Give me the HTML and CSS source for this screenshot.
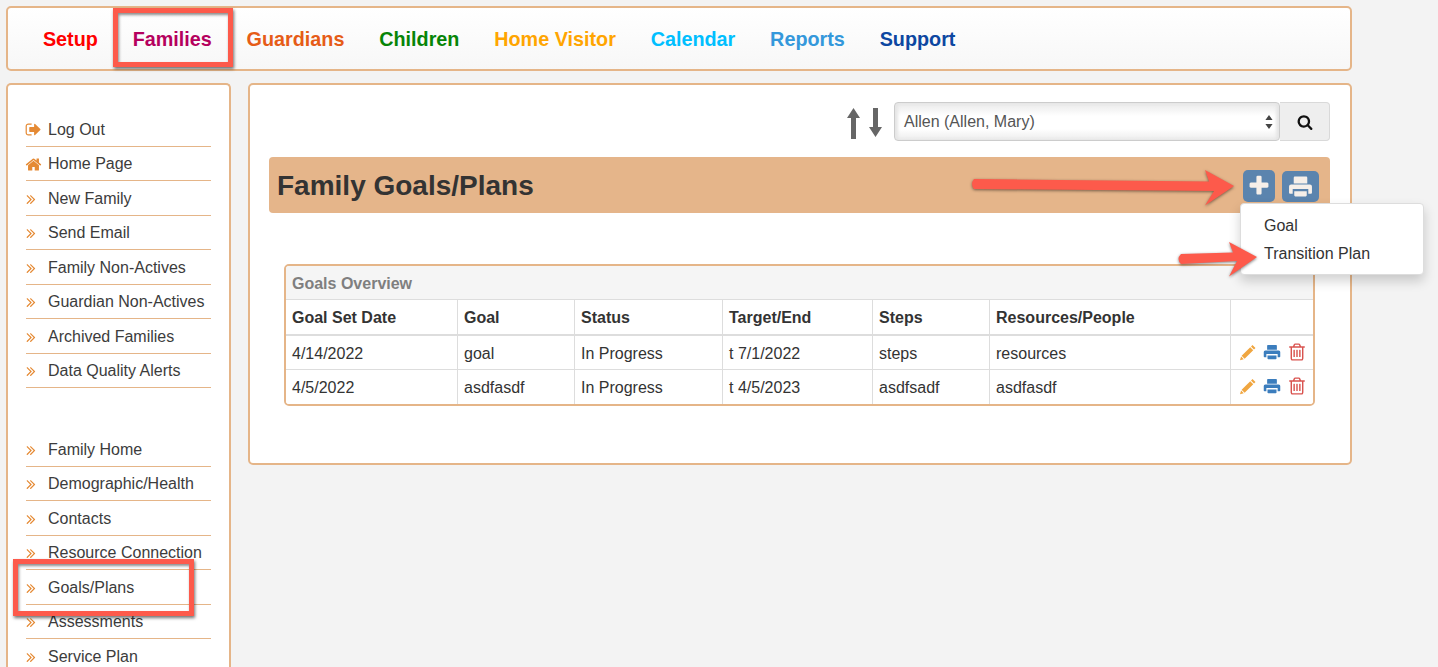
FILE: index.html
```html
<!DOCTYPE html>
<html lang="en">
<head>
<meta charset="utf-8">
<title>Family Goals/Plans</title>
<link rel="stylesheet" href="styles.css">
</head>
<body>
<svg class="defs" width="0" height="0" aria-hidden="true">
  <symbol id="i-search" viewBox="0 0 1792 1792"><path d="M1216 832q0-185-131.500-316.500t-316.500-131.500-316.500 131.500-131.500 316.500 131.500 316.500 316.500 131.500 316.500-131.500 131.500-316.500zm512 832q0 52-38 90t-90 38q-54 0-90-38l-343-342q-179 124-399 124-143 0-273.500-55.500t-225-150-150-225-55.500-273.500 55.500-273.500 150-225 225-150 273.500-55.500 273.500 55.500 225 150 150 225 55.500 273.500q0 220-124 399l343 343q37 37 37 90z"/></symbol>
  <symbol id="i-plus" viewBox="0 0 1792 1792"><path d="M1600 736v192q0 40-28 68t-68 28h-416v416q0 40-28 68t-68 28h-192q-40 0-68-28t-28-68v-416h-416q-40 0-68-28t-28-68v-192q0-40 28-68t68-28h416v-416q0-40 28-68t68-28h192q40 0 68 28t28 68v416h416q40 0 68 28t28 68z"/></symbol>
  <symbol id="i-print" viewBox="0 0 24 24"><path fill-rule="evenodd" d="M6.500 2.500h11a1 1 0 0 1 1 1v5.500h-13v-5.500a1 1 0 0 1 1-1zM3 10h18a2 2 0 0 1 2 2v6a1 1 0 0 1-1 1h-2.500v-4.500h-15v4.500h-2.500a1 1 0 0 1-1-1v-6a2 2 0 0 1 2-2zM6 16.500h12v4a1 1 0 0 1-1 1h-10a1 1 0 0 1-1-1z"/></symbol>
  <symbol id="i-pencil" viewBox="0 0 24 24"><path d="M18 2.500l4 4-2 2-4-4zM15 5.500l4 4-11.500 11.500-4-4zM2.800 18l3.500 3.500-5 1.500z"/></symbol>
  <symbol id="i-trash" viewBox="0 0 1792 1792"><path d="M704 736v576q0 14-9 23t-23 9h-64q-14 0-23-9t-9-23v-576q0-14 9-23t23-9h64q14 0 23 9t9 23zm256 0v576q0 14-9 23t-23 9h-64q-14 0-23-9t-9-23v-576q0-14 9-23t23-9h64q14 0 23 9t9 23zm256 0v576q0 14-9 23t-23 9h-64q-14 0-23-9t-9-23v-576q0-14 9-23t23-9h64q14 0 23 9t9 23zm128 724v-948h-896v948q0 22 7 40.500t14.500 27 10.500 8.500h832q3 0 10.500-8.500t14.500-27 7-40.500zm-672-1076h448l-48-117q-7-9-17-11h-317q-10 2-17 11zm928 32v64q0 14-9 23t-23 9h-96v948q0 83-47 143.500t-113 60.500h-832q-66 0-113-58.500t-47-141.500v-952h-96q-14 0-23-9t-9-23v-64q0-14 9-23t23-9h309l70-167q15-37 54-63t79-26h320q40 0 79 26t54 63l70 167h309q14 0 23 9t9 23z"/></symbol>
  <symbol id="i-home" viewBox="0 0 1792 1792"><path d="M1472 992v480q0 26-19 45t-45 19h-384v-384h-256v384h-384q-26 0-45-19t-19-45v-480q0-1 .5-3t.5-3l575-474 575 474q1 2 1 6zm223-69l-62 74q-8 9-21 11h-3q-13 0-21-7l-692-577-692 577q-12 8-24 7-13-2-21-11l-62-74q-8-10-7-23.500t11-21.500l719-599q32-26 76-26t76 26l244 204v-195q0-14 9-23t23-9h192q14 0 23 9t9 23v408l219 182q10 8 11 21.500t-7 23.500z"/></symbol>
  <symbol id="i-logout" viewBox="0 0 1792 1792"><path d="M704 1440q0 4 1 20t.5 26.500-3 23.500-10 19.500-20.500 6.500h-320q-119 0-203.500-84.500t-84.500-203.500v-704q0-119 84.500-203.500t203.500-84.500h320q13 0 22.500 9.500t9.500 22.500q0 4 1 20t.5 26.500-3 23.500-10 19.500-20.500 6.500h-320q-66 0-113 47t-47 113v704q0 66 47 113t113 47h312l11.500 1 11.500 3 8 5.500 7 9 2 13.500zm928-544q0 26-19 45l-544 544q-19 19-45 19t-45-19-19-45v-288h-448q-26 0-45-19t-19-45v-384q0-26 19-45t45-19h448v-288q0-26 19-45t45-19 45 19l544 544q19 19 19 45z"/></symbol>
  <symbol id="i-angles" viewBox="0 0 1792 1792"><path d="M979 960q0 13-10 23l-466 466q-10 10-23 10t-23-10l-50-50q-10-10-10-23t10-23l393-393-393-393q-10-10-10-23t10-23l50-50q10-10 23-10t23 10l466 466q10 10 10 23zm384 0q0 13-10 23l-466 466q-10 10-23 10t-23-10l-50-50q-10-10-10-23t10-23l393-393-393-393q-10-10-10-23t10-23l50-50q10-10 23-10t23 10l466 466q10 10 10 23z"/></symbol>
</svg>

<div class="app">
  <nav class="topnav">
    <a class="nav-link c-setup">Setup</a>
    <a class="nav-link c-families">Families</a>
    <a class="nav-link c-guardians">Guardians</a>
    <a class="nav-link c-children">Children</a>
    <a class="nav-link c-visitor">Home Visitor</a>
    <a class="nav-link c-calendar">Calendar</a>
    <a class="nav-link c-reports">Reports</a>
    <a class="nav-link c-support">Support</a>
  </nav>

  <div class="columns">
    <aside class="sidebar">
      <ul class="side-list">
        <li class="side-item"><svg class="side-icon side-icon-solid"><use href="#i-logout"/></svg>Log Out</li>
        <li class="side-item"><svg class="side-icon side-icon-solid"><use href="#i-home"/></svg>Home Page</li>
        <li class="side-item"><svg class="side-icon"><use href="#i-angles"/></svg>New Family</li>
        <li class="side-item"><svg class="side-icon"><use href="#i-angles"/></svg>Send Email</li>
        <li class="side-item"><svg class="side-icon"><use href="#i-angles"/></svg>Family Non-Actives</li>
        <li class="side-item"><svg class="side-icon"><use href="#i-angles"/></svg>Guardian Non-Actives</li>
        <li class="side-item"><svg class="side-icon"><use href="#i-angles"/></svg>Archived Families</li>
        <li class="side-item"><svg class="side-icon"><use href="#i-angles"/></svg>Data Quality Alerts</li>
      </ul>
      <ul class="side-list side-list-second">
        <li class="side-item"><svg class="side-icon"><use href="#i-angles"/></svg>Family Home</li>
        <li class="side-item"><svg class="side-icon"><use href="#i-angles"/></svg>Demographic/Health</li>
        <li class="side-item"><svg class="side-icon"><use href="#i-angles"/></svg>Contacts</li>
        <li class="side-item"><svg class="side-icon"><use href="#i-angles"/></svg>Resource Connection</li>
        <li class="side-item"><svg class="side-icon"><use href="#i-angles"/></svg>Goals/Plans</li>
        <li class="side-item"><svg class="side-icon"><use href="#i-angles"/></svg>Assessments</li>
        <li class="side-item side-item-last"><svg class="side-icon"><use href="#i-angles"/></svg>Service Plan</li>
      </ul>
    </aside>

    <main class="panel">
      <div class="picker-row">
        <svg class="sort-arrows" viewBox="0 0 36 31"><path d="M6.500 0l6.500 10h-4v21h-5v-21h-4zM28.500 29l-6.500-10h4v-19h5v19h4z"/></svg>
        <div class="picker">
          <span>Allen (Allen, Mary)</span>
          <svg class="picker-caret" viewBox="0 0 8 14"><path d="M4 0l3.600 5h-7.200zM4 14l-3.600-5h7.200z"/></svg>
        </div>
        <button class="search-btn" type="button"><svg class="search-icon"><use href="#i-search"/></svg></button>
      </div>

      <header class="title-bar">
        <h1 class="title">Family Goals/Plans</h1>
        <div class="title-actions">
          <button class="action-btn action-plus" type="button"><svg class="plus-icon"><use href="#i-plus"/></svg></button>
          <button class="action-btn action-print" type="button"><svg class="print-icon"><use href="#i-print"/></svg></button>
        </div>
      </header>

      <section class="overview">
        <div class="overview-title">Goals Overview</div>
        <table class="goals">
          <colgroup>
            <col class="col-date"><col class="col-goal"><col class="col-status"><col class="col-target"><col class="col-steps"><col class="col-res"><col class="col-act">
          </colgroup>
          <thead>
            <tr><th>Goal Set Date</th><th>Goal</th><th>Status</th><th>Target/End</th><th>Steps</th><th>Resources/People</th><th></th></tr>
          </thead>
          <tbody>
            <tr>
              <td>4/14/2022</td><td>goal</td><td>In Progress</td><td>t 7/1/2022</td><td>steps</td><td>resources</td>
              <td class="row-actions"><svg class="ra ra-edit"><use href="#i-pencil"/></svg><svg class="ra ra-print"><use href="#i-print"/></svg><svg class="ra ra-del"><use href="#i-trash"/></svg></td>
            </tr>
            <tr>
              <td>4/5/2022</td><td>asdfasdf</td><td>In Progress</td><td>t 4/5/2023</td><td>asdfsadf</td><td>asdfasdf</td>
              <td class="row-actions"><svg class="ra ra-edit"><use href="#i-pencil"/></svg><svg class="ra ra-print"><use href="#i-print"/></svg><svg class="ra ra-del"><use href="#i-trash"/></svg></td>
            </tr>
          </tbody>
        </table>
      </section>
    </main>
  </div>

  <div class="add-menu">
    <div class="add-item">Goal</div>
    <div class="add-item">Transition Plan</div>
  </div>

  <div class="callout callout-families"></div>
  <div class="callout callout-goals"></div>
  <svg class="arrows" viewBox="0 0 1438 667" aria-hidden="true">
    <path class="arrow" d="M974 179L1209 181.500L1205 170L1234 186L1205 205.500L1214 191L974 189Q970 184 974 179Z"/>
    <path class="arrow" d="M1181 254L1233 252.500L1229 242L1257 257L1229 276.500L1237 261L1181 264Q1176 259 1181 254Z"/>
  </svg>
</div>
</body>
</html>
```
FILE: styles.css
```css
* { box-sizing: border-box; }
html, body { margin: 0; height: 100%; overflow: hidden; }
body {
  background: #f3f3f3;
  color: #333;
  font-family: "Liberation Sans", Arial, sans-serif;
  font-size: 16px;
}
.defs { position: absolute; }
.app {
  position: relative;
  width: 1438px;
  height: 667px;
  overflow: hidden;
  padding: 6px 0 0 6px;
}

/* top navigation */
.topnav {
  display: flex;
  align-items: center;
  width: 1346px;
  height: 65px;
  padding: 2px 0 0 17.500px;
  border: 2px solid #e5b588;
  border-radius: 5px;
  background: linear-gradient(#fff, #f7f7f7);
}
.nav-link {
  padding: 0 17.400px;
  font-size: 19.800px;
  font-weight: 700;
}
.c-setup { color: #f00; }
.c-families { color: #b5005e; }
.c-guardians { color: #e65c17; }
.c-children { color: #078507; }
.c-visitor { color: #ffa500; }
.c-calendar { color: #00bfff; }
.c-reports { color: #3498db; }
.c-support { color: #0d47a1; }

/* columns */
.columns {
  display: flex;
  align-items: flex-start;
  gap: 17px;
  margin-top: 12px;
}
.sidebar {
  flex: none;
  width: 225px;
  height: 600px;
  padding: 27px 18px 0 18px;
  background: #fff;
  border: 2px solid #e5b588;
  border-radius: 5px 5px 0 0;
  border-bottom: 0;
}
.side-list { list-style: none; margin: 0; padding: 0; }
.side-list-second { margin-top: 44px; }
.side-item {
  display: flex;
  align-items: center;
  height: 34.500px;
  padding-top: 2px;
  border-bottom: 1px solid #e5b588;
  color: #3c3c3c;
  white-space: nowrap;
}
.side-item-last { border-bottom: 0; }
.side-icon {
  flex: none;
  width: 16px;
  height: 16px;
  margin: 0 9px 0 -3px;
  fill: #e58a34;
}
.side-icon-solid {
  width: 17px;
  height: 17px;
  margin: 0 6.500px 0 -1.500px;
}

/* main panel */
.panel {
  flex: none;
  width: 1104px;
  height: 382px;
  padding: 17px 20px 0 19px;
  background: #fff;
  border: 2px solid #e5b588;
  border-radius: 5px;
}
.picker-row {
  display: flex;
  align-items: center;
  justify-content: flex-end;
  height: 39px;
}
.sort-arrows { width: 36px; height: 31px; margin: 4px 11px 0 0; fill: #666; }
.picker {
  display: flex;
  align-items: center;
  justify-content: space-between;
  width: 386px;
  height: 39px;
  padding: 0 6px 0 9px;
  border: 1px solid #ccc;
  border-radius: 4px;
  background: linear-gradient(#e9e9e9, #fff 35%, #fff 70%, #ececec);
  box-shadow: inset 3px 0 3px #e6e6e6, inset -3px 0 3px #e6e6e6;
  color: #555;
}
.picker-caret { width: 8px; height: 14px; fill: #444; }
.search-btn {
  display: flex;
  align-items: center;
  justify-content: center;
  width: 50px;
  height: 39px;
  padding: 0;
  border: 1px solid #d9d9d9;
  border-left: 0;
  border-radius: 0 4px 4px 0;
  background: #eee;
}
.search-icon { width: 16px; height: 16px; fill: #111; }

.title-bar {
  display: flex;
  align-items: center;
  justify-content: space-between;
  height: 56px;
  margin-top: 16px;
  padding: 0 11px 0 8px;
  background: #e5b58a;
  border-radius: 4px;
}
.title { margin: 0; padding-top: 2px; font-size: 28px; font-weight: 700; color: #333; line-height: 1; }
.title-actions { display: flex; gap: 7px; align-items: flex-start; padding-top: 3px; }
.action-btn {
  display: flex;
  align-items: center;
  justify-content: center;
  padding: 0;
  border: 0;
  border-radius: 5px;
  background: #5b84ae;
}
.action-plus { width: 32px; height: 32px; margin-top: -1px; }
.action-print { width: 37px; height: 31px; }
.plus-icon { width: 24px; height: 24px; fill: #f6efe9; }
.print-icon { width: 25px; height: 25px; fill: #f6efe9; }

/* table */
.overview {
  width: 1031px;
  margin: 51px 0 0 15px;
  border: 2px solid #e5b588;
  border-radius: 5px;
  overflow: hidden;
}
.overview-title {
  height: 34px;
  padding: 2px 6px 0;
  line-height: 32px;
  background: #f5f5f5;
  border-bottom: 1px solid #ddd;
  color: #7f7f7f;
  font-weight: 700;
}
.goals {
  width: 100%;
  table-layout: fixed;
  border-collapse: collapse;
  background: #fff;
}
.col-date { width: 171px; }
.col-goal { width: 117px; }
.col-status { width: 148px; }
.col-target { width: 150px; }
.col-steps { width: 117px; }
.col-res { width: 241px; }
.goals th, .goals td {
  height: 34.500px;
  padding: 2px 6px 0 6.500px;
  text-align: left;
  border-left: 1px solid #ddd;
  color: #333;
  white-space: nowrap;
}
.goals th:first-child, .goals td:first-child { border-left: 0; padding-left: 6px; }
.goals th { font-weight: 700; border-bottom: 2px solid #ddd; height: 35px; }
.goals tbody tr + tr td { border-top: 1px solid #ddd; }
.row-actions { font-size: 0; }
.goals .row-actions { padding: 0 0 2px 8px; }
.ra { width: 18px; height: 18px; margin-right: 6px; vertical-align: middle; }
.ra-edit { fill: #f0a640; }
.ra-print { fill: #3b7dbd; }
.ra-del { width: 20px; height: 20px; margin: 0; fill: #d9534f; }

/* dropdown */
.add-menu {
  position: absolute;
  left: 1240px;
  top: 203px;
  width: 184px;
  height: 72px;
  padding: 8px 0;
  background: #fff;
  border: 1px solid #ddd;
  border-radius: 4px;
  box-shadow: 0 6px 12px rgba(0, 0, 0, .18);
}
.add-item { height: 28px; line-height: 28px; padding-left: 23px; color: #333; }

/* annotations */
.callout {
  position: absolute;
  border: 5px solid #fd5a4b;
  box-shadow: 1px 2px 3px rgba(0, 0, 0, .55), inset 1px 2px 3px rgba(0, 0, 0, .45);
}
.callout-families { left: 113px; top: 8px; width: 120px; height: 59px; }
.callout-goals { left: 13px; top: 559px; width: 181px; height: 57px; }
.arrows { position: absolute; left: 0; top: 0; width: 1438px; height: 667px; pointer-events: none; }
.arrow { fill: #fd5a4b; filter: drop-shadow(0 1.500px 1.500px rgba(0, 0, 0, .5)); }
```
